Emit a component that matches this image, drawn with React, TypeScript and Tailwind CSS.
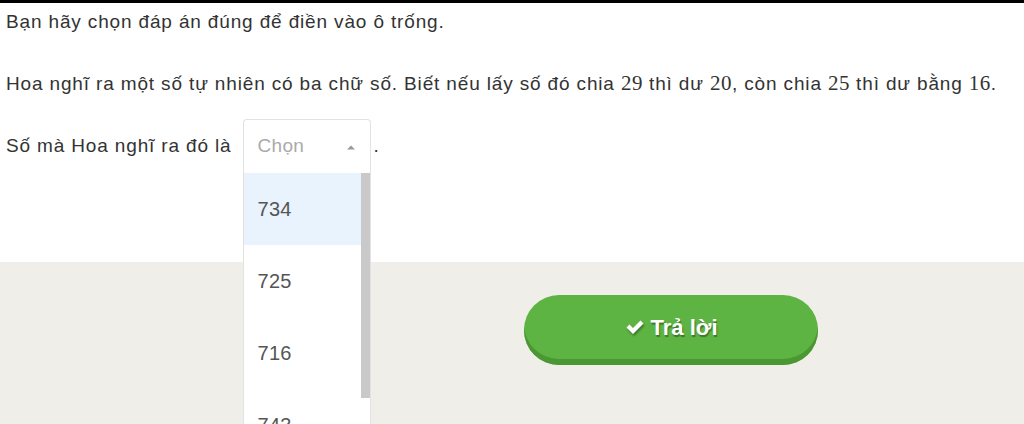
export default function App() {
  const options = ["734", "725", "716", "743"];
  const num = "font-['Liberation_Serif',serif] text-[21px] tracking-[0.5px]";
  return (
    <div className="w-[1024px] h-[424px] overflow-hidden bg-white font-['Liberation_Sans',Arial,sans-serif] text-[#333] relative">
      <div className="h-[3px] bg-black" />
      <div className="h-[259px] px-[6px] text-[19px] tracking-[0.85px]">
        <p className="pt-[6px] leading-[26px]">Bạn hãy chọn đáp án đúng để điền vào ô trống.</p>
        <p className="mt-[35px] leading-[26px] whitespace-nowrap">
          Hoa nghĩ ra một số tự nhiên có ba chữ số. Biết nếu lấy số đó chia <span className={num}>29</span> thì dư{" "}
          <span className={num}>20</span>, còn chia <span className={num}>25</span> thì dư bằng{" "}
          <span className={num}>16</span>.
        </p>
        <div className="mt-[22px] flex items-start">
          <span className="pt-[14px] leading-[26px]">Số mà Hoa nghĩ ra đó là</span>
          <div className="relative ml-[11px] w-[128px] tracking-[0.3px]">
            <div className="h-[54px] border border-[#e2e2e2] border-b-0 rounded-t-[4px] flex items-center justify-between pl-[14px] pr-[14px] text-[#aaa]">
              <span>Chọn</span>
              <svg width="10" height="6" viewBox="0 0 10 6" className="mt-[1px]">
                <path d="M1 5.5 L5 1.5 L9 5.5 Z" fill="#999" />
              </svg>
            </div>
            <div className="absolute left-0 top-[54px] w-[128px] h-[300px] bg-white border-x border-[#e2e2e2] z-10 overflow-hidden">
              {options.map((o, i) => (
                <div
                  key={o}
                  className={`h-[72px] flex items-center pl-[14px] text-[20px] text-[#555] ${i === 0 ? "bg-[#e9f3fd]" : ""}`}
                >
                  {o}
                </div>
              ))}
              <div className="absolute right-0 top-0 w-[9px] h-[225px] bg-[#c9c9c9]" />
            </div>
          </div>
          <span className="pt-[14px] leading-[26px] ml-[3px]">.</span>
        </div>
      </div>
      <div className="h-[162px] bg-[#efeee8] flex pt-[33px] pl-[524px]">
        <button className="w-[294px] h-[70px] rounded-full bg-[#5db442] shadow-[inset_0_-6px_0_#4a9734] flex items-center justify-center gap-[6px] text-white text-[22px] font-bold [text-shadow:1px_2px_1px_rgba(0,0,0,0.35)] pb-[6px]">
          <svg width="20" height="16" viewBox="0 0 20 16" className="drop-shadow-[1px_2px_1px_rgba(0,0,0,0.35)]">
            <path d="M1.5 8.5 L4.5 5.5 L8 9 L15.5 1.5 L18.5 4.5 L8 15 Z" fill="#fff" />
          </svg>
          <span>Trả lời</span>
        </button>
      </div>
    </div>
  );
}
